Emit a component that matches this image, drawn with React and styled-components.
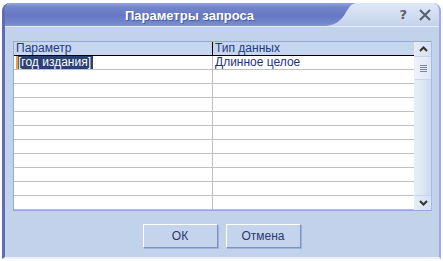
import styled, { createGlobalStyle } from "styled-components";

const GlobalStyle = createGlobalStyle`
  html, body {
    margin: 0;
    background: #ffffff;
  }
  body {
    font-family: "Liberation Sans", Arial, sans-serif;
  }
`;

const rows = [
  { param: "[год издания]", type: "Длинное целое", selected: true },
  ...Array.from({ length: 10 }, () => ({ param: "", type: "" })),
];

const App = () => {
  return (
    <>
      <GlobalStyle />
      <Window>
        <TitleBar>
          <Wave viewBox="0 0 439 24" preserveAspectRatio="none">
            <defs>
              <linearGradient id="waveFill" x1="0" y1="0" x2="0" y2="1">
                <stop offset="0" stopColor="#dfe7f6" />
                <stop offset="1" stopColor="#c4d3ec" />
              </linearGradient>
            </defs>
            <path d="M356 0 C344 1 348 21 326 24 L439 24 L439 0 Z" fill="url(#waveFill)" />
          </Wave>
          <Title>Параметры запроса</Title>
          <Controls>
            <Help>?</Help>
            <svg width="12" height="12" viewBox="0 0 12 12">
              <path d="M1 1 L11 11 M11 1 L1 11" stroke="#5a5f6e" strokeWidth="2" />
            </svg>
          </Controls>
        </TitleBar>

        <Body>
          <Grid>
            <Table>
              <HeadRow>
                <HeadCell $first>Параметр</HeadCell>
                <HeadCell>Тип данных</HeadCell>
              </HeadRow>
              {rows.map((r, i) => (
                <Row key={i}>
                  <Cell $first>
                    {r.selected ? (
                      <>
                        <Caret />
                        <Selected>{r.param}</Selected>
                      </>
                    ) : (
                      r.param
                    )}
                  </Cell>
                  <Cell>{r.type}</Cell>
                </Row>
              ))}
            </Table>
            <Scrollbar>
              <ScrollButton>
                <svg width="9" height="6" viewBox="0 0 9 6">
                  <path d="M1 5 L4.5 1.5 L8 5" stroke="#333" strokeWidth="2" fill="none" />
                </svg>
              </ScrollButton>
              <Thumb>
                <Grip />
                <Grip />
                <Grip />
                <Grip />
              </Thumb>
              <Track />
              <ScrollButton>
                <svg width="9" height="6" viewBox="0 0 9 6">
                  <path d="M1 1 L4.5 4.5 L8 1" stroke="#333" strokeWidth="2" fill="none" />
                </svg>
              </ScrollButton>
            </Scrollbar>
          </Grid>

          <Buttons>
            <Button>ОК</Button>
            <Button>Отмена</Button>
          </Buttons>
        </Body>
      </Window>
    </>
  );
};

const Window = styled.div`
  margin: 3px 0 0 2px;
  width: 439px;
  height: 256px;
  box-sizing: border-box;
  background: #c1d2ea;
  border-left: 3px solid #5e6db6;
  border-right: 2px solid #9aaee0;
  border-bottom: 2px solid #eef3fb;
  border-radius: 8px 8px 0 0;
  display: flex;
  flex-direction: column;
  overflow: hidden;
`;

const TitleBar = styled.div`
  position: relative;
  height: 23px;
  flex: none;
  margin-left: -3px;
  background: linear-gradient(
    180deg,
    #97a5dc 0%,
    #7285cb 18%,
    #6678c4 55%,
    #7385cb 85%,
    #8394d2 100%
  );
  border-radius: 8px 8px 0 0;
  display: flex;
  align-items: center;
  justify-content: center;
  border-bottom: 1px solid #e6edf8;
`;

const Wave = styled.svg`
  position: absolute;
  left: 0;
  top: 0;
  width: 100%;
  height: 100%;
`;

const Title = styled.div`
  position: relative;
  color: #ffffff;
  font-weight: bold;
  font-size: 13px;
  margin-left: -62px;
  margin-top: 2px;
  text-shadow: 1px 1px 0 #4a5a9e;
`;

const Controls = styled.div`
  position: absolute;
  right: 8px;
  top: 6px;
  display: flex;
  align-items: center;
  gap: 12px;
`;

const Help = styled.span`
  font-family: "DejaVu Sans", sans-serif;
  font-weight: bold;
  font-size: 13px;
  color: #5a5f6e;
  line-height: 12px;
`;

const Body = styled.div`
  flex: 1;
  padding: 14px 7px 0 8px;
  display: flex;
  flex-direction: column;
`;

const Grid = styled.div`
  height: 170px;
  box-sizing: border-box;
  border: 1px solid #92a8da;
  border-right: 1px solid #a9bbe3;
  background: #ffffff;
  display: flex;
  overflow: hidden;
`;

const Table = styled.div`
  width: 400px;
  flex: none;
  display: flex;
  flex-direction: column;
`;

const HeadRow = styled.div`
  display: flex;
  height: 13px;
  flex: none;
  background: #c6d6ee;
  border-bottom: 1px solid #000000;
`;

const HeadCell = styled.div`
  width: ${(p) => (p.$first ? "199px" : "200px")};
  box-sizing: border-box;
  border-right: 1px solid ${(p) => (p.$first ? "#000000" : "#c6d6ee")};
  font-size: 12px;
  line-height: 13px;
  color: #233a7c;
  padding-left: 2px;
  white-space: nowrap;
`;

const Row = styled.div`
  display: flex;
  height: 14px;
  flex: none;
  box-sizing: border-box;
  border-bottom: 1px solid #c0c0c0;
`;

const Cell = styled.div`
  width: ${(p) => (p.$first ? "199px" : "200px")};
  box-sizing: border-box;
  border-right: 1px solid ${(p) => (p.$first ? "#c0c0c0" : "#ffffff")};
  font-size: 12px;
  line-height: 13px;
  color: #1f3478;
  padding-left: 2px;
  white-space: nowrap;
  display: flex;
  align-items: stretch;
`;

const Caret = styled.span`
  width: 2px;
  background: #e8a23a;
`;

const Selected = styled.span`
  background: #2a4272;
  color: #ffffff;
  padding-right: 2px;
`;

const Scrollbar = styled.div`
  width: 17px;
  flex: none;
  display: flex;
  flex-direction: column;
  background: linear-gradient(90deg, #e6edf8 0%, #dbe5f5 50%, #c9d7ee 100%);
  border-left: 1px solid #e8eef9;
`;

const ScrollButton = styled.div`
  height: 14px;
  flex: none;
  display: flex;
  align-items: center;
  justify-content: center;
  background: linear-gradient(90deg, #e4ebf7 0%, #d4dff2 100%);
  border-bottom: 1px solid #c5d3ec;

  &:last-child {
    border-bottom: none;
    border-top: 1px solid #c5d3ec;
  }
`;

const Thumb = styled.div`
  height: 22px;
  flex: none;
  display: flex;
  flex-direction: column;
  align-items: center;
  justify-content: center;
  gap: 1px;
  background: linear-gradient(90deg, #eef2fa 0%, #dde6f5 100%);
  border-bottom: 1px solid #c8d5ec;
`;

const Grip = styled.span`
  width: 7px;
  height: 1px;
  background: #7d8597;
`;

const Track = styled.div`
  flex: 1;
`;

const Buttons = styled.div`
  display: flex;
  justify-content: center;
  gap: 8px;
  margin-top: 13px;
  margin-left: -2px;
`;

const Button = styled.button`
  width: 75px;
  height: 24px;
  box-sizing: border-box;
  background: #c3d4ec;
  border: 1px solid;
  border-color: #ffffff #7d90c8 #7d90c8 #ffffff;
  box-shadow: 1px 1px 0 #9fb2dd;
  font-family: "Liberation Sans", Arial, sans-serif;
  font-size: 12px;
  color: #2a3a70;
  padding: 0;
`;

export default App;
